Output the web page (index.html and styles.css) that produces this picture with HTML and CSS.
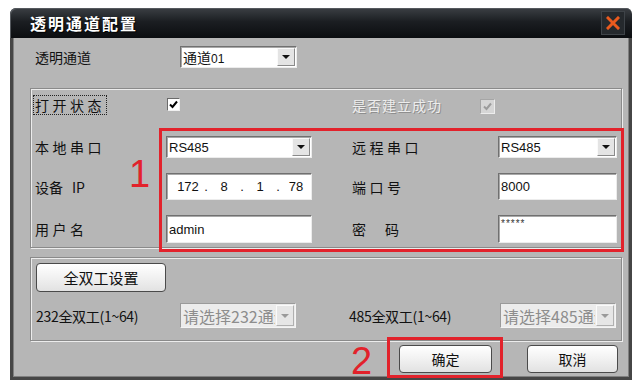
FILE: index.html
```html
<!DOCTYPE html>
<html lang="zh-CN">
<head>
    <meta charset="UTF-8">
    <meta name="viewport" content="width=device-width, initial-scale=1.0">
    <title>透明通道配置</title>
    <link rel="stylesheet" href="styles.css">
</head>
<body>
    <div class="dialog">
        <div class="titlebar">
            <span class="title">透明通道配置</span>
            <span class="close">
                <svg width="14" height="14" viewBox="0 0 14 14"><path d="M2 2 L12 12 M12 2 L2 12" stroke="#ea5a1e" stroke-width="3" stroke-linecap="square"/></svg>
            </span>
        </div>

        <div class="panel">
            <div class="row-channel">
                <span class="label">透明通道</span>
                <div class="select sel-channel"><span class="value cjk">通道<small>01</small></span><span class="arrow"></span></div>
            </div>

            <div class="group group-main">
                <div class="status-row">
                    <span class="label spaced focus">打开状态</span>
                    <span class="check"><svg width="11" height="11" viewBox="0 0 11 11"><path d="M2 5.5 L4.5 8 L9 2.5" fill="none" stroke="#000" stroke-width="2"/></svg></span>
                    <span class="label disabled">是否建立成功</span>
                    <span class="check check-off"><svg width="11" height="11" viewBox="0 0 11 11"><path d="M2 5.5 L4.5 8 L9 2.5" fill="none" stroke="#9c9c9c" stroke-width="2"/></svg></span>
                </div>

                <div class="field-grid">
                    <span class="label spaced">本地串口</span>
                    <div class="select field-l"><span class="value">RS485</span><span class="arrow"></span></div>
                    <span class="label spaced">远程串口</span>
                    <div class="select field-r"><span class="value">RS485</span><span class="arrow"></span></div>

                    <span class="label">设备<span class="ip-tag">IP</span></span>
                    <div class="input field-l ip">
                        <span class="octet">172</span><span class="dot">.</span>
                        <span class="octet">8</span><span class="dot">.</span>
                        <span class="octet">1</span><span class="dot">.</span>
                        <span class="octet">78</span>
                    </div>
                    <span class="label spaced">端口号</span>
                    <div class="input field-r">8000</div>

                    <span class="label spaced">用户名</span>
                    <div class="input field-l">admin</div>
                    <span class="label wide">密码</span>
                    <div class="input field-r password">*****</div>
                </div>
            </div>

            <div class="group group-duplex">
                <button class="btn btn-duplex">全双工设置</button>
                <div class="duplex-row">
                    <span class="small-label">232全双工(1~64)</span>
                    <div class="select select-off"><span class="value">请选择232通道</span><span class="arrow"></span></div>
                    <span class="small-label">485全双工(1~64)</span>
                    <div class="select select-off"><span class="value">请选择485通道</span><span class="arrow"></span></div>
                </div>
            </div>

            <div class="actions">
                <button class="btn btn-ok">确定</button>
                <button class="btn btn-cancel">取消</button>
            </div>
        </div>

        <!-- annotation marks drawn over the dialog -->
        <div class="mark mark-fields"></div>
        <div class="mark mark-ok"></div>
        <span class="mark-num num-1">1</span>
        <span class="mark-num num-2">2</span>
    </div>
</body>
</html>
```

FILE: styles.css
```css
body {
    margin: 0;
    background: #fff;
    font-family: 'Noto Sans CJK SC', sans-serif;
    color: #111;
}

.dialog {
    position: relative;
    margin: 8px 0 0 10px;
    width: 622px;
    height: 372px;
    display: flex;
    flex-direction: column;
}

.titlebar {
    height: 30px;
    flex: none;
    display: flex;
    justify-content: space-between;
    align-items: center;
    padding: 0 7px 0 20px;
    border-radius: 6px 6px 0 0;
    background: linear-gradient(#3b3f44, #1b1e22 45%, #0b0d10);
    box-shadow: inset 1px 1px 0 #55595e;
}

.title {
    color: #fff;
    font-size: 16px;
    font-weight: bold;
    letter-spacing: 2px;
    text-shadow: 1px 1px 1px #000;
}

.close {
    width: 22px;
    height: 22px;
    display: flex;
    justify-content: center;
    align-items: center;
    background: #25292d;
    border: 1px solid #3e4348;
}

.panel {
    flex: 1;
    display: flex;
    flex-direction: column;
    padding: 8px 7px 0 17px;
    background: #b6b6b6;
    border: 3px solid #464646;
    border-top: none;
    box-shadow: inset 1px 0 0 #808080, inset -1px 0 0 #808080, inset 0 -1px 0 #808080;
}

.label {
    font-size: 14px;
    line-height: 16px;
    white-space: nowrap;
}

.spaced {
    letter-spacing: 3.5px;
}

.wide {
    letter-spacing: 19px;
}

.ip-tag {
    margin-left: 9px;
}

.focus {
    justify-self: start;
    outline: 1px dotted #222;
    outline-offset: 1px;
}

.disabled {
    color: #ededed;
    letter-spacing: 1px;
    text-shadow: 1px 1px 0 #8e8e8e;
}

.row-channel {
    display: grid;
    grid-template-columns: 145px 117px;
    align-items: center;
    height: 22px;
    padding-left: 5px;
}

.select, .input {
    box-sizing: border-box;
    display: flex;
    align-items: center;
    background: #fff;
    border: 1px solid;
    border-color: #707070 #ececec #ececec #707070;
    box-shadow: inset 1px 1px 0 #a8a8a8;
    font-family: 'Liberation Sans', sans-serif;
    font-size: 13px;
    overflow: hidden;
}

.select .value {
    flex: 1;
    min-width: 0;
    padding-left: 2px;
    white-space: nowrap;
    overflow: hidden;
}

.cjk {
    font-family: 'Noto Sans CJK SC', sans-serif;
    font-size: 14px;
}

.cjk small {
    font-family: 'Liberation Sans', sans-serif;
    font-size: 12px;
}

.arrow {
    flex: none;
    width: 16px;
    align-self: stretch;
    margin: 1px;
    background: #e4e4e4;
    border: 1px solid;
    border-color: #fafafa #8a8a8a #8a8a8a #fafafa;
    position: relative;
}

.arrow::after {
    content: "";
    position: absolute;
    left: 4px;
    top: 50%;
    margin-top: -2px;
    border-left: 4px solid transparent;
    border-right: 4px solid transparent;
    border-top: 4px solid #111;
}

.sel-channel {
    height: 22px;
}

.input {
    padding-left: 2px;
}

.group {
    box-sizing: border-box;
    border: 1px solid #8a8a8a;
    box-shadow: inset 1px 1px 0 #ececec, 1px 1px 0 #ececec;
}

.group-main {
    margin-top: 20px;
    height: 160px;
    padding: 6px 0 0 4px;
}

.status-row {
    display: grid;
    grid-template-columns: 131px 186px 127px 15px;
    align-items: center;
    height: 16px;
}

.check {
    box-sizing: border-box;
    width: 13px;
    height: 13px;
    margin-left: 1px;
    display: flex;
    justify-content: center;
    align-items: center;
    background: #fff;
    border: 1px solid;
    border-color: #6a6a6a #f0f0f0 #f0f0f0 #6a6a6a;
}

.check-off {
    width: 15px;
    height: 15px;
    margin-top: 4px;
    background: #d6d6d6;
    border-color: #a6a6a6 #ededed #ededed #a6a6a6;
}

.field-grid {
    margin-top: 25px;
    display: grid;
    grid-template-columns: 131px 186px 146px 119px;
    grid-template-rows: 22px 27px 28px;
    row-gap: 15px;
    align-items: center;
}

.field-l {
    width: 146px;
    height: 100%;
}

.field-r {
    width: 119px;
    height: 100%;
}

.ip {
    padding-left: 6px;
}

.octet {
    width: 30px;
    text-align: center;
}

.dot {
    width: 6px;
    text-align: center;
}

.password {
    align-items: flex-start;
    font-size: 10px;
    padding-top: 2px;
    letter-spacing: 1px;
    color: #333;
}

.group-duplex {
    margin-top: 9px;
    height: 84px;
    padding: 5px 0 0 5px;
}

.btn {
    box-sizing: border-box;
    height: 28px;
    padding: 0;
    background: linear-gradient(#ffffff, #f1f1f1 50%, #e2e2e2);
    border: 1px solid #4a4a4a;
    border-radius: 4px;
    font-family: 'Noto Sans CJK SC', sans-serif;
    font-size: 14px;
    color: #111;
    cursor: pointer;
}

.btn-duplex {
    display: block;
    width: 130px;
    height: 29px;
    font-size: 15px;
}

.duplex-row {
    margin-top: 11px;
    display: grid;
    grid-template-columns: 144px 169px 151px 117px;
    align-items: center;
    height: 25px;
}

.small-label {
    font-size: 14px;
    white-space: nowrap;
    letter-spacing: -0.3px;
}

.select-off {
    width: 116px;
    height: 25px;
    background: #ececec;
    border-color: #9a9a9a #f4f4f4 #f4f4f4 #9a9a9a;
    box-shadow: none;
    font-family: 'Noto Sans CJK SC', sans-serif;
    font-size: 16px;
    color: #8d8d8d;
}

.select-off .arrow {
    background: #e6e6e6;
    border-color: #fafafa #b0b0b0 #b0b0b0 #fafafa;
}

.select-off .arrow::after {
    border-top-color: #9a9a9a;
}

.actions {
    margin-top: 4px;
    display: flex;
    justify-content: flex-end;
    gap: 35px;
    padding-right: 4px;
}

.btn-ok {
    width: 93px;
}

.btn-cancel {
    width: 91px;
}

.mark {
    position: absolute;
    border: 3px solid #e2222b;
}

.mark-fields {
    left: 149px;
    top: 120px;
    width: 459px;
    height: 118px;
}

.mark-ok {
    left: 377px;
    top: 329px;
    width: 110px;
    height: 35px;
}

.mark-num {
    position: absolute;
    font-family: 'Liberation Sans', sans-serif;
    font-size: 38px;
    line-height: 38px;
    color: #e2222b;
}

.num-1 {
    left: 119px;
    top: 147px;
}

.num-2 {
    left: 341px;
    top: 334px;
}
```
